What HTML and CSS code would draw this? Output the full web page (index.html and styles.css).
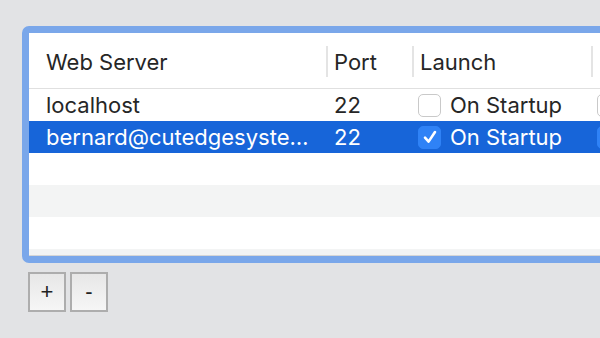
FILE: index.html
```html
<!DOCTYPE html>
<html lang="en">

<head>
    <meta charset="UTF-8">
    <meta name="viewport" content="width=device-width, initial-scale=1.0">
    <title>Web Servers</title>
    <link rel="stylesheet" href="styles.css">
</head>

<body>
    <div class="wrap">
        <div class="panel">
            <div class="grid">
                <div class="row head">
                    <div class="cell first">Web Server</div>
                    <div class="cell sep">Port</div>
                    <div class="cell sep">Launch</div>
                    <div class="cell sep"></div>
                </div>
                <div class="row">
                    <div class="cell first">localhost</div>
                    <div class="cell">22</div>
                    <div class="cell"><span class="box"></span>On Startup</div>
                    <div class="cell"><span class="box"></span></div>
                </div>
                <div class="row selected">
                    <div class="cell first">bernard@cutedgesyste…</div>
                    <div class="cell">22</div>
                    <div class="cell"><span class="box checked"><svg width="18" height="18" viewBox="0 0 18 18"><path d="M4 9.6 L7.6 13.6 L14 4" fill="none" stroke="#fff" stroke-width="2.6" stroke-linecap="round" stroke-linejoin="round"/></svg></span>On Startup</div>
                    <div class="cell"><span class="box checked"></span></div>
                </div>
                <div class="row"></div>
                <div class="row alt"></div>
                <div class="row"></div>
                <div class="row alt short"></div>
            </div>
        </div>
        <div class="buttons">
            <button class="btn">+</button>
            <button class="btn">-</button>
        </div>
    </div>
</body>

</html>
```

FILE: styles.css
```css
* {
    margin: 0;
    padding: 0;
    box-sizing: border-box;
}

html,
body {
    height: 100%;
    overflow: hidden;
}

body {
    background: #e2e3e5;
    font-family: Inter, "Liberation Sans", sans-serif;
    color: #262626;
}

.wrap {
    padding: 26px 0 0 22px;
}

.panel {
    width: 640px;
    border: 7px solid #7aa7ea;
    border-radius: 7px;
    background: #fff;
    overflow: hidden;
}

.grid {
    border-bottom: 1px solid #d6d6d6;
}

.row {
    display: grid;
    grid-template-columns: 297px 86px 179px 1fr;
    height: 32px;
    align-items: center;
    font-size: 22px;
}

.row.head {
    height: 56px;
    border-bottom: 1px solid #e0e0e0;
}

.row.selected {
    background: #1765d9;
    color: #fff;
}

.row.alt {
    background: #f3f4f4;
}

.row.short {
    height: 6px;
}

.cell {
    display: flex;
    align-items: center;
    height: 100%;
    padding-left: 6px;
    white-space: nowrap;
    overflow: hidden;
}

.row .cell:nth-child(2) {
    padding-left: 8px;
}

.cell.first {
    padding-left: 17px;
}

.head .cell {
    padding-top: 2px;
}

.head .cell:nth-child(3) {
    padding-left: 8px;
}

.cell.sep {
    position: relative;
}

.cell.sep::before {
    content: "";
    position: absolute;
    left: 0;
    top: 13px;
    bottom: 11px;
    width: 2px;
    background: #e4e4e4;
}

.box {
    display: inline-flex;
    align-items: center;
    justify-content: center;
    width: 23px;
    height: 23px;
    margin-right: 9px;
    border: 1px solid #c9c9c9;
    border-radius: 5px;
    background: #fff;
    flex-shrink: 0;
}

.box.checked {
    background: #2f82f6;
    border-color: #2f82f6;
}

.buttons {
    display: flex;
    gap: 4px;
    padding: 9px 0 0 6px;
}

.btn {
    width: 38px;
    height: 40px;
    border: 2px solid #adadad;
    background: linear-gradient(#e7e7e7, #f6f6f6);
    font-family: "Liberation Sans", sans-serif;
    font-size: 22px;
    color: #222;
    line-height: 1;
}
```
